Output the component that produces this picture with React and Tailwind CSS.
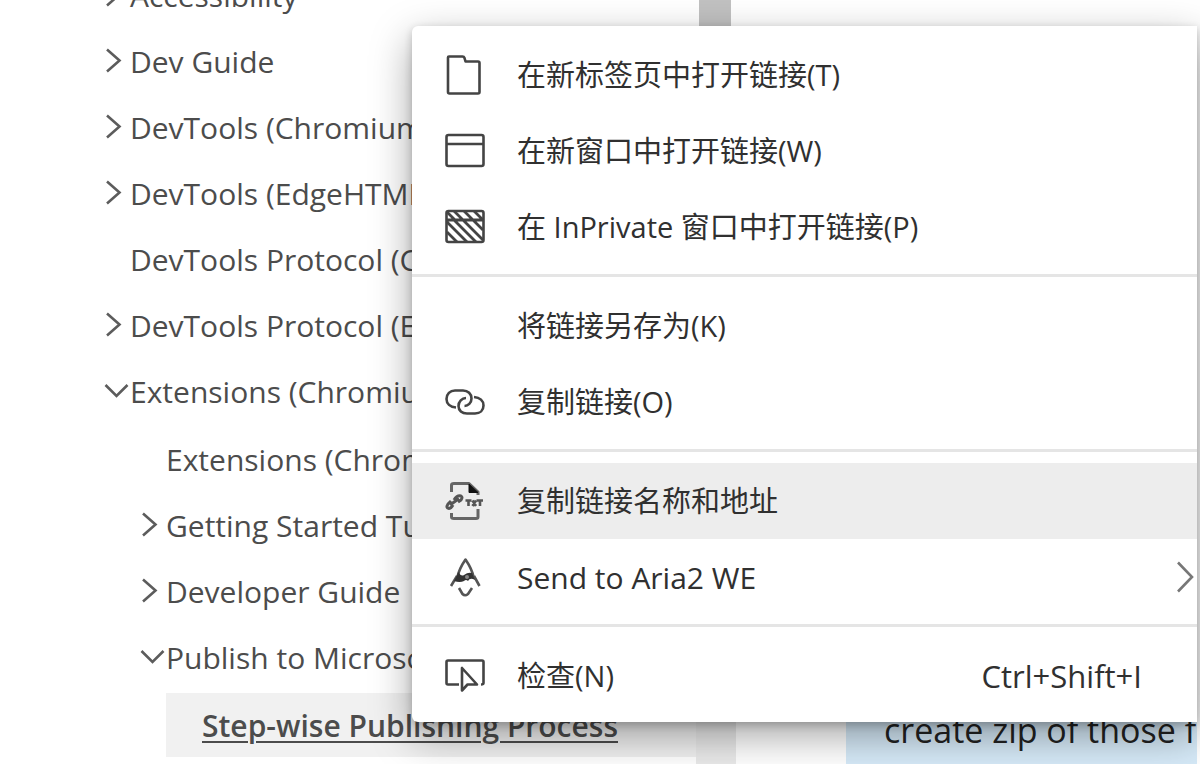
import React from "react";

function Chevron({ open }) {
  return open ? (
    <svg className="w-[26px] h-7 shrink-0" viewBox="0 0 26 28" fill="none" stroke="#5c5c5c" strokeWidth="2.6">
      <path d="M1.5 8 L12.5 19 L23.5 8" />
    </svg>
  ) : (
    <svg className="w-[26px] h-7 shrink-0" viewBox="0 0 26 28" fill="none" stroke="#5c5c5c" strokeWidth="2.6">
      <path d="M3 2.5 L15.5 13.5 L3 24.5" />
    </svg>
  );
}

function NavRow({ label, state }) {
  return (
    <a href="#" className="flex h-[66px] items-center whitespace-nowrap">
      {state ? <Chevron open={state === "open"} /> : <span className="w-[26px] shrink-0" />}
      <span>{label}</span>
    </a>
  );
}

function Sidebar() {
  return (
    <nav aria-label="Documentation" className="-mt-[38px] min-w-0 grow-0 shrink-0 basis-[58%] overflow-hidden pl-[104px] text-[30px] text-[#4c4c4c]">
      <ul>
        <li><NavRow label="Accessibility" state="closed" /></li>
        <li><NavRow label="Dev Guide" state="closed" /></li>
        <li><NavRow label="DevTools (Chromium)" state="closed" /></li>
        <li><NavRow label="DevTools (EdgeHTML)" state="closed" /></li>
        <li><NavRow label="DevTools Protocol (Chromium)" /></li>
        <li><NavRow label="DevTools Protocol (EdgeHTML)" state="closed" /></li>
        <li>
          <NavRow label="Extensions (Chromium)" state="open" />
          <ul className="mt-0.5 pl-9">
            <li><NavRow label="Extensions (Chromium)" /></li>
            <li><NavRow label="Getting Started Tutorials" state="closed" /></li>
            <li><NavRow label="Developer Guide" state="closed" /></li>
            <li>
              <NavRow label="Publish to Microsoft Edge" state="open" />
              <ul className="mt-[3px] pl-[26px]">
                <li>
                  <a href="#" aria-current="page" className="flex h-16 items-center whitespace-nowrap bg-[#f1f1f1] pl-9 font-semibold underline decoration-2 underline-offset-4">
                    Step-wise Publishing Process
                  </a>
                </li>
              </ul>
            </li>
          </ul>
        </li>
      </ul>
    </nav>
  );
}

function Icon({ children }) {
  return (
    <svg className="w-10 h-10 shrink-0" viewBox="0 0 40 40" fill="none" stroke="#444" strokeWidth="2.6" strokeLinejoin="round">
      {children}
    </svg>
  );
}

const TabIcon = () => (
  <Icon><path d="M4 1.5 H17.5 Q19 1.5 19.5 3 L20.5 6.5 H33 Q34.500 6.5 34.500 8 V37 Q34.500 38.5 33 38.5 H4.500 Q3 38.5 3 37 V2.5 Q3 1.500 4 1.500 Z" /></Icon>
);
const WindowIcon = () => (
  <Icon><rect x="1.5" y="4" width="37" height="31" rx="2" /><path d="M2 13 H38" /></Icon>
);
const InPrivateIcon = () => (
  <Icon>
    <rect x="1.5" y="4" width="37" height="31" rx="2" />
    <path d="M2 13 H38 M2 5 L10 13 M9 4 L18 13 M19 4 L28 13 M29 4 L38 13 M2 25 L12 35 M2 15 L22 35 M9 13 L31 35 M18 13 L38 33 M28 13 L38 23" strokeWidth="2.8" />
  </Icon>
);
const LinkIcon = () => (
  <Icon>
    <path d="M11 25.5 C5 25 1.5 21.5 1.5 17 C1.5 12 5 8.5 10 8.5 H18 C23 8.5 26.5 12 26.5 16.5 C26.5 21 23 24 19.5 24" />
    <path d="M29 15 C35 15.5 38.5 19 38.5 23.5 C38.5 28.5 35 31.5 30 31.5 H22 C17 31.5 13.5 28.5 13.5 24 C13.5 19.5 17 16 21 16" />
  </Icon>
);
const TextFileIcon = () => (
  <Icon>
    <path d="M6.500 11 V4 Q6.500 2.5 9 2.5 H24 L33 11 V14 M6.500 32 V36 Q6.500 37.5 9 37.5 H31 Q33 37.5 33 36 V28" stroke="#666" strokeWidth="3" />
    <path d="M24 3 V11.5 H33 Z" fill="#111" stroke="#111" strokeWidth="1" />
    <path d="M6 20 L3 23 Q0.500 27 4 27.500 Q6 27.500 8 24 M9 19 Q12 14 16 15 Q18 16 16 19 L13 21 M5 24 L14 17.500" stroke="#555" strokeWidth="3" />
    <path d="M20.500 19.500 H26.500 M23.500 19.500 V25 M27.500 19.500 L31 25 M31 19.500 L27.500 25 M31.500 19.500 H38 M35 19.500 V25" stroke="#555" strokeWidth="2.6" />
  </Icon>
);
const RocketIcon = () => (
  <Icon>
    <path d="M12.500 20 Q14 12 20.500 2.500 Q27 12 28.500 20 M12 19 L6 29 M29 19 L34.500 29 M14 31 L17.500 37 Q20 39.500 23 37 L27 31" stroke="#555" strokeWidth="2.6" />
    <path d="M9 24 L13.500 15 Q16 20 19 18 Q23 15 27 16 L30 23 Q25 20 23 24 Q21 22 19 24 Q15 26 9 24 Z" fill="#333" stroke="none" />
    <circle cx="22" cy="20" r="2" fill="#888" stroke="none" />
  </Icon>
);
const InspectIcon = () => (
  <Icon>
    <path d="M14 28.500 H3 Q1.500 28.500 1.500 27 V6 Q1.500 4.500 3 4.500 H37 Q38.500 4.500 38.500 6 V27 Q38.500 28.500 36 28.500" />
    <path d="M17 12 V34.500 L22.500 28.500 H32 Z" />
  </Icon>
);

function MenuItem({ icon, children, shortcut, submenu, active }) {
  return (
    <button
      type="button"
      role="menuitem"
      className={
        "flex h-[76px] w-full items-center whitespace-nowrap pl-[33px] text-left text-[#303030] " +
        (active ? "bg-[#ededed]" : "bg-transparent")
      }
    >
      {icon || <span className="w-10 shrink-0" />}
      <span className="ml-8 grow">{children}</span>
      {shortcut && <kbd className="mr-[55px] text-[31px] font-[inherit]">{shortcut}</kbd>}
      {submenu && (
        <svg className="mr-0.5 w-5 h-8" viewBox="0 0 20 32" fill="none" stroke="#777" strokeWidth="2.6">
          <path d="M3 1.500 L17 16 L3 30.500" />
        </svg>
      )}
    </button>
  );
}

const Divider = () => <div role="separator" className="mb-[11px] mt-[9px] h-[3px] bg-[#e5e5e5]" />;

function ContextMenu() {
  return (
    <div
      role="menu"
      className='absolute left-[412px] right-[3px] top-[26px] rounded-l-md bg-white pb-2 pt-[11px] font-["Open_Sans","Noto_Sans_CJK_SC",sans-serif] text-[29px] shadow-[0_14px_40px_rgba(0,0,0,0.36),0_3px_8px_rgba(0,0,0,0.2)]'
    >
      <MenuItem icon={<TabIcon />}>在新标签页中打开链接(T)</MenuItem>
      <MenuItem icon={<WindowIcon />}>在新窗口中打开链接(W)</MenuItem>
      <MenuItem icon={<InPrivateIcon />}>在 InPrivate 窗口中打开链接(P)</MenuItem>
      <Divider />
      <MenuItem>将链接另存为(K)</MenuItem>
      <MenuItem icon={<LinkIcon />}>复制链接(O)</MenuItem>
      <Divider />
      <MenuItem icon={<TextFileIcon />} active>复制链接名称和地址</MenuItem>
      <MenuItem icon={<RocketIcon />} submenu><span className="text-[30px]">Send to Aria2 WE</span></MenuItem>
      <Divider />
      <MenuItem icon={<InspectIcon />} shortcut="Ctrl+Shift+I">检查(N)</MenuItem>
    </div>
  );
}

export default function App() {
  return (
    <div className='relative flex h-screen overflow-hidden bg-white font-["Open_Sans","Noto_Sans_CJK_SC",sans-serif]'>
      <Sidebar />
      <div className="flex w-10 shrink-0 flex-col justify-between">
        <div className="ml-[3px] mr-[5px] h-40 bg-[#c1c1c1]" />
        <div className="h-20 bg-[#eaeaea]" />
      </div>
      <main className="flex min-w-0 grow flex-col justify-end pl-[110px] pr-[3px]">
        <p className="flex h-28 items-end overflow-hidden whitespace-nowrap bg-[#d6eaf8] pb-2 pl-[38px] text-[34px] text-[#222]">
          create zip of those files
        </p>
      </main>
      <ContextMenu />
    </div>
  );
}
